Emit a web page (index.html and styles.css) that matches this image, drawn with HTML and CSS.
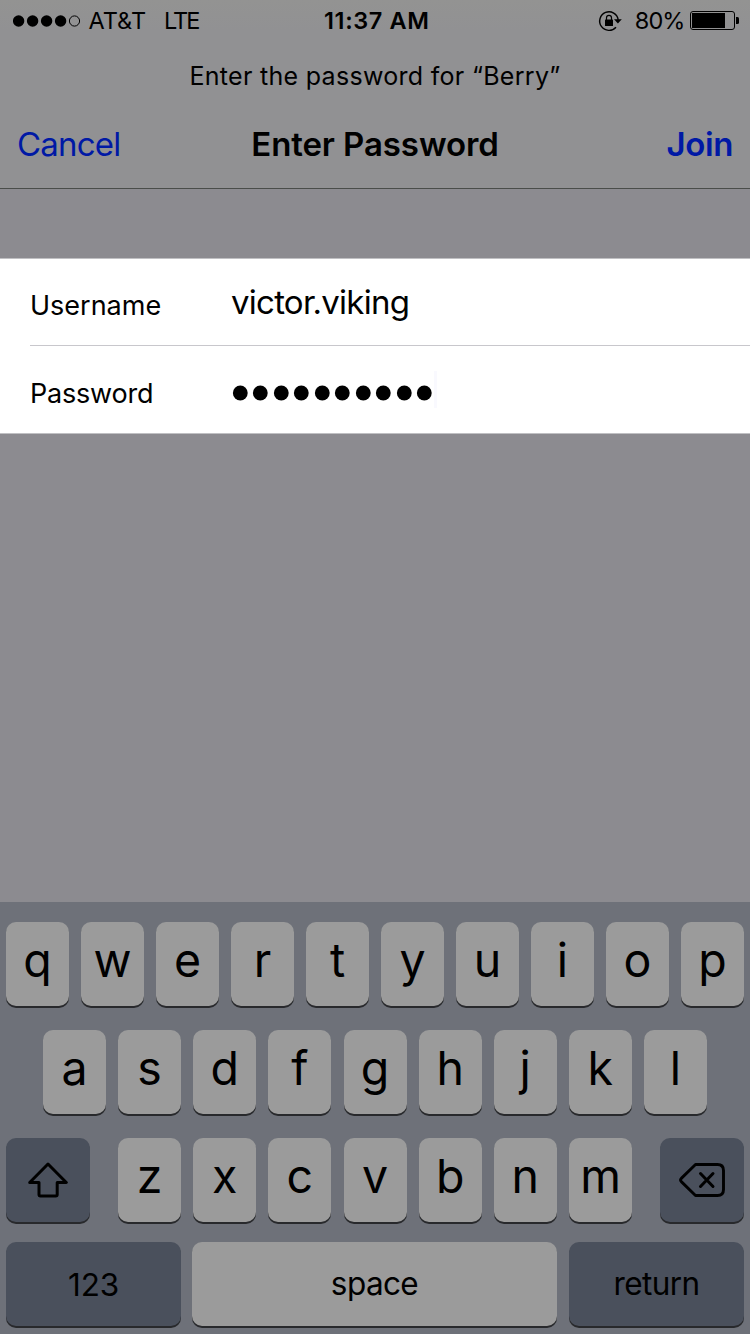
FILE: index.html
```
<!DOCTYPE html>
<html lang="en">
<head>
<meta charset="utf-8">
<title>Enter Password</title>
<link rel="stylesheet" href="styles.css">
</head>
<body>
<div class="screen">
  <header class="header">
    <div class="status">
      <div class="status-left">
        <svg class="signal" width="68" height="12" viewBox="0 0 68 12"><circle cx="5.6" cy="6" r="5.7"/><circle cx="19.6" cy="6" r="5.7"/><circle cx="33.6" cy="6" r="5.7"/><circle cx="47.6" cy="6" r="5.7"/><circle cx="61.5" cy="6" r="5.1" fill="none" stroke="#000" stroke-width="1"/></svg>
        <span class="carrier">AT&amp;T</span><span class="network">LTE</span>
      </div>
      <div class="time">11:37 AM</div>
      <div class="status-right">
        <svg class="lock" width="25" height="22" viewBox="0 0 25 22"><path d="M20.2 9.8A9.3 9.3 0 1 0 18 17.2" fill="none" stroke="#000" stroke-width="1.4"/><path d="M16 9.3h7.8l-3.9 4.3z"/><rect x="7" y="9.6" width="8" height="6.4" rx=".6"/><path d="M8.5 10V7.8a2.5 2.5 0 0 1 5 0V10" fill="none" stroke="#000" stroke-width="1.2"/></svg>
        <span class="percent">80%</span>
        <svg class="battery" width="49" height="19" viewBox="0 0 49 19"><rect x=".5" y=".5" width="44" height="18" rx="2.5" fill="none" stroke="#000"/><rect x="2" y="2" width="33" height="15"/><path d="M46 6h1.5q1.5 0 1.5 1.5v4q0 1.5-1.5 1.5H46z"/></svg>
      </div>
    </div>
    <p class="prompt">Enter the password for “Berry”</p>
    <nav class="nav">
      <a class="cancel">Cancel</a>
      <h1 class="title">Enter Password</h1>
      <a class="join">Join</a>
    </nav>
  </header>
  <main class="form">
    <div class="row"><label class="label">Username</label><span class="value">victor.viking</span></div>
    <div class="row row-last"><label class="label label-password">Password</label>
      <svg class="dots" width="204" height="16" viewBox="0 0 204 16"><circle cx="9.3" cy="8" r="7.4"/><circle cx="29.3" cy="8" r="7.4"/><circle cx="50.3" cy="8" r="7.4"/><circle cx="70.3" cy="8" r="7.4"/><circle cx="91.3" cy="8" r="7.4"/><circle cx="111.3" cy="8" r="7.4"/><circle cx="132.3" cy="8" r="7.4"/><circle cx="152.3" cy="8" r="7.4"/><circle cx="173.3" cy="8" r="7.4"/><circle cx="193.3" cy="8" r="7.4"/></svg><span class="caret"></span>
    </div>
  </main>
  <section class="keyboard">
    <div class="keys"><span class="key">q</span><span class="key">w</span><span class="key">e</span><span class="key">r</span><span class="key">t</span><span class="key">y</span><span class="key">u</span><span class="key">i</span><span class="key">o</span><span class="key">p</span></div>
    <div class="keys keys-home"><span class="key">a</span><span class="key">s</span><span class="key">d</span><span class="key">f</span><span class="key">g</span><span class="key">h</span><span class="key">j</span><span class="key">k</span><span class="key">l</span></div>
    <div class="keys keys-lower">
      <span class="key dark side"><svg width="40" height="36" viewBox="0 0 40 36"><path d="M20 2 38.3 20.5H29.2V32.5Q29.2 34 27.7 34H12.5Q11 34 11 32.5V20.5H1.7Z" fill="none" stroke="#000" stroke-width="3" stroke-linejoin="round"/></svg></span>
      <div class="keys-mid"><span class="key">z</span><span class="key">x</span><span class="key">c</span><span class="key">v</span><span class="key">b</span><span class="key">n</span><span class="key">m</span></div>
      <span class="key dark side"><svg width="46" height="34" viewBox="0 0 46 34"><path d="M16.5 1.5H38.5Q44.5 1.5 44.5 7.5V26.5Q44.5 32.5 38.5 32.5H16.5L2.3 18.6Q.8 17 2.3 15.4Z" fill="none" stroke="#000" stroke-width="2.9" stroke-linejoin="round"/><path d="M21.5 10.5 34 23.5M34 10.5 21.5 23.5" stroke="#000" stroke-width="3" stroke-linecap="round"/></svg></span>
    </div>
    <div class="keys keys-bottom">
      <span class="key dark word numbers">123</span><span class="key word space">space</span><span class="key dark word return">return</span>
    </div>
  </section>
</div>
</body>
</html>
```
FILE: styles.css
```
* { box-sizing: border-box; }
body { margin: 0; font-family: Inter, "Liberation Sans", sans-serif; color: #000; }
.screen { width: 750px; height: 1334px; display: flex; flex-direction: column; background: #8c8b90; white-space: nowrap; overflow: hidden; }
svg { display: block; flex: none; }
.header { height: 189px; background: linear-gradient(#939392, #919193 30px); border-bottom: 1px solid #4a4d4a; }
.status { display: grid; grid-template-columns: 1fr auto 1fr; height: 41px; padding: 0 11px 0 13px; font-size: 23.5px; line-height: 41px; }
.status-left, .status-right { display: flex; align-items: center; }
.status-right { justify-content: flex-end; }
.carrier { margin-left: 7.5px; }
.network { margin-left: 18px; letter-spacing: -2px; }
.time { font-weight: 600; letter-spacing: 0.6px; padding-left: 1.5px; }
.percent { margin: 0 5.5px 0 12px; letter-spacing: -0.9px; }
.prompt { margin: 0; height: 70px; line-height: 70px; text-align: center; font-size: 25px; letter-spacing: 0.3px; }
.nav { display: grid; grid-template-columns: 1fr auto 1fr; padding: 0 17px 0 17px; font-size: 33px; line-height: 66px; }
.cancel, .join { color: #0019a5; }
.cancel { letter-spacing: -0.8px; }
.title { margin: 0; font-size: 33px; font-weight: 600; letter-spacing: -0.1px; }
.join { font-weight: 600; text-align: right; letter-spacing: -0.4px; }
.form { margin-top: 69px; height: 176px; background: #fff; border-top: 1px solid #c0c0c3; border-bottom: 1px solid #c0c0c3; }
.row { height: 87px; display: flex; margin-left: 30px; border-bottom: 1px solid #c8c7cc; }
.row-last { border-bottom: 0; align-items: center; }
.label { width: 201px; font-size: 27px; line-height: 94px; }
.label-password { padding-top: 7px; line-height: 87px; letter-spacing: -0.2px; }
.value { font-size: 33px; line-height: 86px; letter-spacing: -0.75px; }
.dots { margin-top: 7px; }
.caret { width: 3px; height: 37px; margin-left: -1px; background: #f9f9fe; }
.keyboard { margin-top: auto; height: 432px; padding: 20px 6px 0; background: #6e7179; }
.keys { display: flex; justify-content: space-between; margin-bottom: 24px; }
.keys-home { padding: 0 37px; }
.keys-lower { margin-bottom: 20px; }
.keys-mid { display: flex; justify-content: space-between; width: 514px; margin-left: 0.16px; }
.key { width: 63px; height: 84px; border-radius: 10px; background: #9b9b9b; box-shadow: 0 2px 0 #28292c; text-align: center; font-size: 46.5px; line-height: 76px; }
.dark { background: #4a505c; }
.side { width: 84px; display: flex; align-items: center; justify-content: center; }
.word { font-size: 31.5px; line-height: 83px; letter-spacing: -0.6px; }
.numbers, .return { width: 175px; }
.numbers { line-height: 85px; letter-spacing: -0.2px; }
.space { width: 365px; margin-right: 1px; }
.keys-bottom { margin: 0; }
```
